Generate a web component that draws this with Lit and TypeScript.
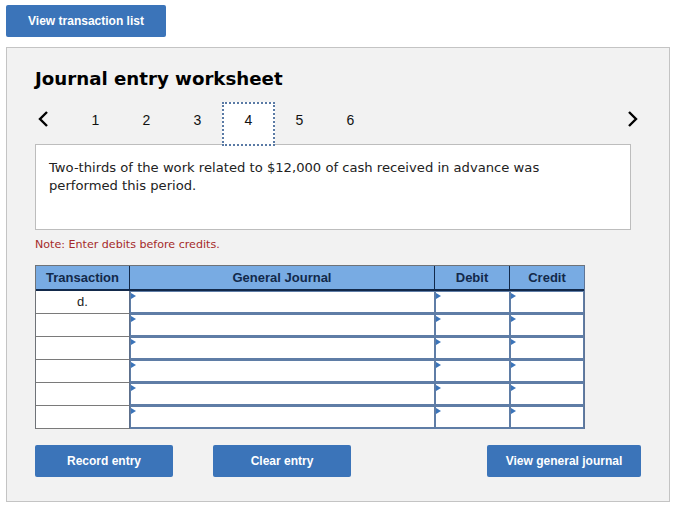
import { LitElement, html, css } from 'lit';
import { customElement, state } from 'lit/decorators.js';

@customElement('app-root')
export class AppRoot extends LitElement {
    static styles = css`
        :host {
            display: block;
            width: 690px;
            height: 516px;
            background: #fff;
            font-family: "Liberation Sans", Arial, sans-serif;
            box-sizing: border-box;
            padding: 5px 20px 0 6px;
        }
        * { box-sizing: border-box; }
        .btn {
            display: flex;
            align-items: center;
            justify-content: center;
            height: 32px;
            background: #3b74b9;
            color: #fff;
            border: 0;
            border-radius: 2px;
            font: bold 12px "Liberation Sans", Arial, sans-serif;
            padding: 0;
        }
        .list-btn { width: 160px; }
        .panel {
            margin-top: 10px;
            height: 455px;
            background: #f2f2f2;
            border: 1px solid #c4c4c4;
            padding: 19px 28px 0 28px;
        }
        h1 {
            margin: 0;
            height: 24px;
            font: bold 18.2px/24px "DejaVu Sans", Verdana, sans-serif;
            color: #000;
        }
        .tabs {
            display: flex;
            align-items: flex-start;
            margin-top: 12px;
            height: 43px;
            position: relative;
            z-index: 1;
        }
        .arrow { width: 17px; height: 18px; display: block; margin-top: 7px; }
        .tab-list { display: flex; margin-left: 18px; }
        .tab {
            width: 51px;
            height: 43px;
            display: flex;
            justify-content: center;
            padding-top: 9px;
            font-size: 14px;
            color: #111;
        }
        .tab.active {
            width: 53px;
            height: 44px;
            margin: -1px -1px 0;
            background: #fff;
            border: 2px dotted #5a7aa5;
            padding-top: 8px;
        }
        .spacer { flex: 1; }
        .prompt {
            margin-top: -2px;
            width: 596px;
            height: 86px;
            background: #fff;
            border: 1px solid #bdbdbd;
            padding: 14px 80px 0 13px;
            font: 13.15px/18px "DejaVu Sans", Verdana, sans-serif;
            color: #222;
        }
        .note {
            margin: 8px 0 0;
            height: 14px;
            font: 11.1px/14px "DejaVu Sans", Verdana, sans-serif;
            color: #a52a2a;
        }
        .sheet {
            margin-top: 13px;
            width: 550px;
            display: grid;
            grid-template-columns: 94px 305px 75px 74px;
            grid-template-rows: 25px repeat(6, 23px);
            border: 1px solid #6f7378;
            border-bottom: 0;
            border-right-color: #5f7596;
        }
        .head {
            background: #78abe3;
            color: #12294a;
            font-weight: bold;
            font-size: 13px;
            display: flex;
            align-items: center;
            justify-content: center;
            border-right: 1px solid #12294a;
            border-bottom: 2px solid #12294a;
        }
        .head.last { border-right: 0; }
        .cell-t {
            background: #fff;
            border-right: 1px solid #5d6f8a;
            border-bottom: 1px solid #7a7a7a;
            display: flex;
            justify-content: center;
            font-size: 13px;
            color: #222;
            padding-top: 3px;
        }
        .cell-i {
            position: relative;
            background: #fff;
            border: 2px solid #5f7da6;
            border-width: 1px 1px 2px 1px;
        }
        .cell-i::before {
            content: "";
            position: absolute;
            left: 0;
            top: 1px;
            border-left: 5px solid #3b74b9;
            border-top: 3.5px solid transparent;
            border-bottom: 3.5px solid transparent;
        }
        .actions {
            display: flex;
            margin-top: 16px;
        }
        .actions .btn:nth-child(1), .actions .btn:nth-child(2) { width: 138px; }
        .actions .btn:nth-child(2) { margin-left: 40px; }
        .actions .btn:nth-child(3) { width: 154px; margin-left: 136px; }
    `;

    @state() rows = ['d.', '', '', '', '', ''];
    @state() current = 4;

    render() {
        return html`
            <button class="btn list-btn">View transaction list</button>
            <div class="panel">
                <h1>Journal entry worksheet</h1>
                <div class="tabs">
                    <svg class="arrow" viewBox="0 0 17 18"><path d="M12 2 L5 9 L12 16" fill="none" stroke="#000" stroke-width="2.4"/></svg>
                    <div class="tab-list">
                        ${[1, 2, 3, 4, 5, 6].map(n => html`<div class="tab ${n === this.current ? 'active' : ''}">${n}</div>`)}
                    </div>
                    <div class="spacer"></div>
                    <svg class="arrow" viewBox="0 0 17 18"><path d="M5 2 L12 9 L5 16" fill="none" stroke="#000" stroke-width="2.4"/></svg>
                </div>
                <div class="prompt">Two-thirds of the work related to $12,000 of cash received in advance was performed this period.</div>
                <p class="note">Note: Enter debits before credits.</p>
                <div class="sheet">
                    <div class="head">Transaction</div>
                    <div class="head">General Journal</div>
                    <div class="head">Debit</div>
                    <div class="head last">Credit</div>
                    ${this.rows.map(r => html`
                        <div class="cell-t">${r}</div>
                        <div class="cell-i"></div>
                        <div class="cell-i"></div>
                        <div class="cell-i"></div>
                    `)}
                </div>
                <div class="actions">
                    <button class="btn">Record entry</button>
                    <button class="btn">Clear entry</button>
                    <button class="btn">View general journal</button>
                </div>
            </div>
        `;
    }
}
